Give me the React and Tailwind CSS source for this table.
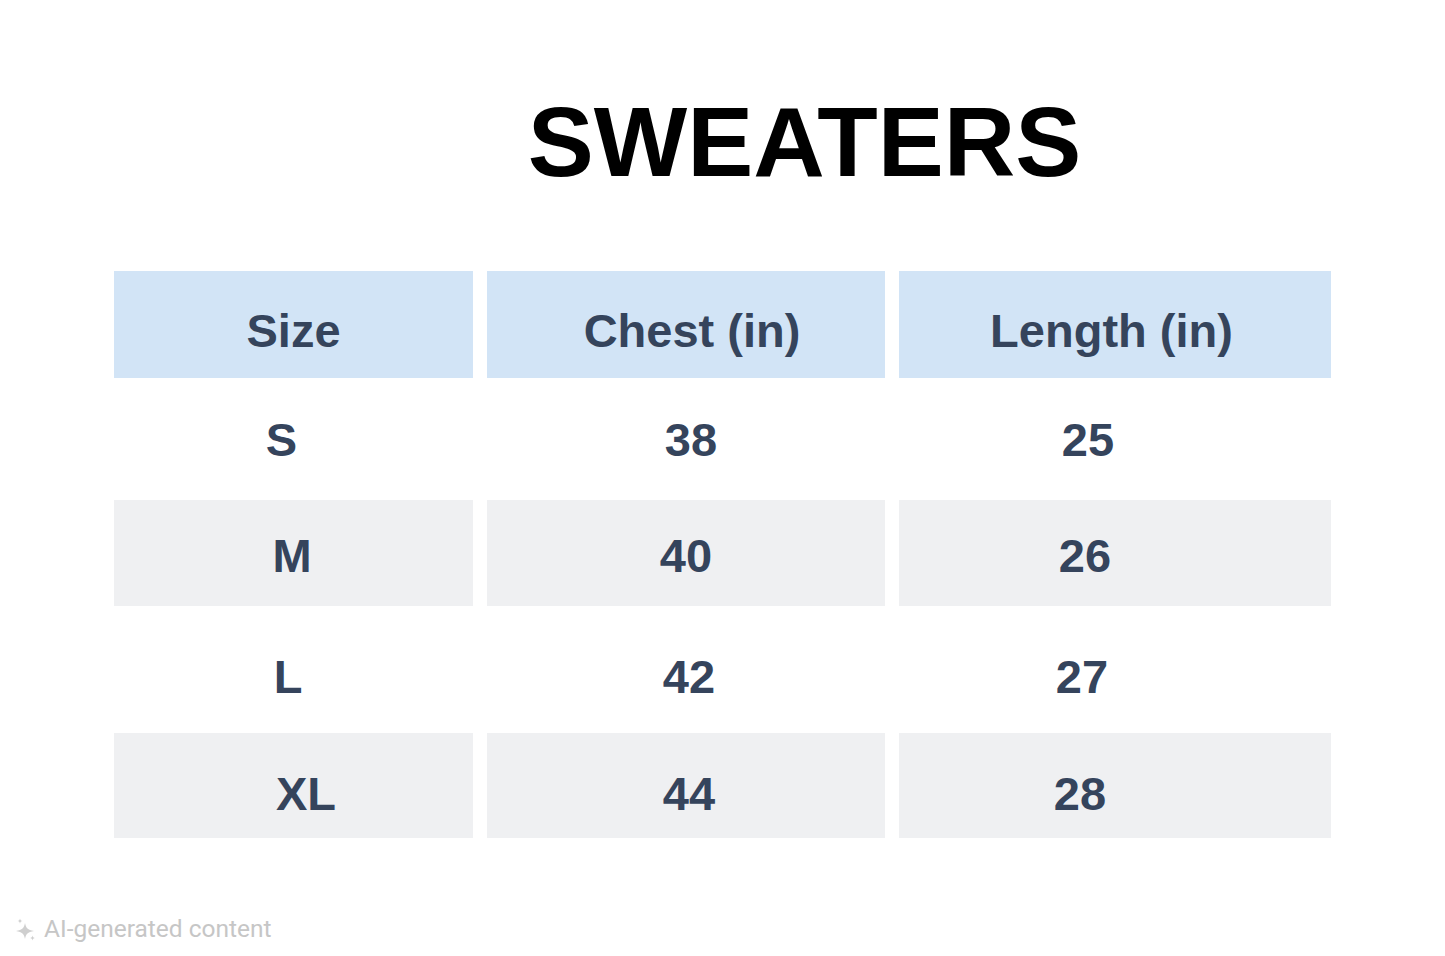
const headers = [
  { label: 'Size', pad: '' },
  { label: 'Chest (in)', pad: 'pl-[12px]' },
  { label: 'Length (in)', pad: 'pr-[7px]' },
];

const rows = [
  { bg: '', h: 'h-[122px]', pt: 'pt-0', cells: [['S', 'pr-[24px]'], ['38', 'pl-[10px]'], ['25', 'pr-[54px]']] },
  { bg: 'bg-[#eff0f2]', h: 'h-[106px]', pt: 'pt-[4px]', cells: [['M', 'pr-[3px]'], ['40', ''], ['26', 'pr-[60px]']] },
  { bg: '', h: 'h-[127px]', pt: 'pt-[14px]', cells: [['L', 'pr-[11px]'], ['42', 'pl-[6px]'], ['27', 'pr-[66px]']] },
  { bg: 'bg-[#eff0f2]', h: 'h-[105px]', pt: 'pt-[15px]', cells: [['XL', 'pl-[25px]'], ['44', 'pl-[6px]'], ['28', 'pr-[70px]']] },
];

// grey "AI" spark mark, one big four-point star with two small ones
const SparkIcon = () => (
  <svg width="22" height="24" viewBox="0 0 22 24" fill="#cfcfcf">
    <path d="M10 5 C11 10 12.5 12 19 13 C12.5 14 11 16 10 21 C9 16 7.5 14 1 13 C7.5 12 9 10 10 5 Z" />
    <path d="M5 0.5 C5.3 2.2 5.9 2.8 7.5 3.1 C5.9 3.4 5.3 4 5 5.7 C4.7 4 4.1 3.4 2.5 3.1 C4.1 2.8 4.7 2.2 5 0.5 Z" />
    <path d="M17.5 17.5 C17.8 19.1 18.4 19.7 20 20 C18.4 20.3 17.8 20.9 17.5 22.5 C17.2 20.9 16.6 20.3 15 20 C16.6 19.7 17.2 19.1 17.5 17.5 Z" />
  </svg>
);

const App = () => {
  return (
    <div className="w-[1445px] h-[956px] bg-white flex flex-col font-['Liberation_Sans',Arial,sans-serif] text-[#35445c]">
      <h1 className="pt-[92px] pl-[164px] text-center text-[99px] leading-none font-bold text-black">
        SWEATERS
      </h1>

      <div className="mt-[80px] ml-[114px] grid grid-cols-[359px_398px_432px] gap-x-[14px]">
        {headers.map(h => (
          <div
            key={h.label}
            className={`h-[107px] bg-[#d2e4f6] flex items-center justify-center pt-[12px] text-[47px] font-bold leading-none ${h.pad}`}
          >
            {h.label}
          </div>
        ))}
        {rows.map((row, i) =>
          row.cells.map(([text, pad], j) => (
            <div
              key={`${i}-${j}`}
              className={`${row.h} ${row.bg} ${row.pt} ${pad} flex items-center justify-center text-[47px] font-bold leading-none`}
            >
              {text}
            </div>
          ))
        )}
      </div>

      <div className="mt-auto mb-[8px] ml-[15px] flex items-center gap-[7px] text-[#c6c6c6] font-['Roboto',sans-serif] text-[24.5px]">
        <SparkIcon />
        <span>AI-generated content</span>
      </div>
    </div>
  );
};

export default App;
